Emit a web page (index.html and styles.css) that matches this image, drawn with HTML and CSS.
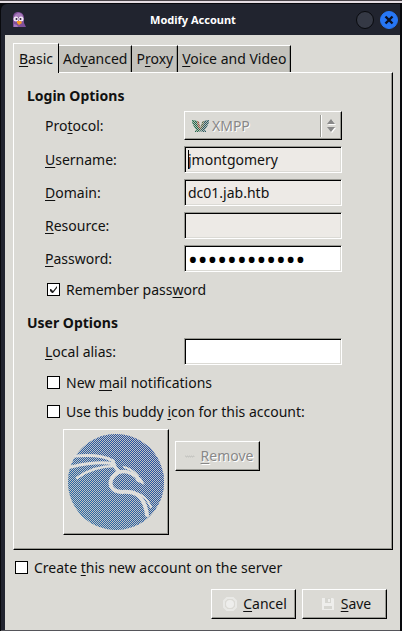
FILE: index.html
```
<!DOCTYPE html>
<html lang="en">
<head>
<meta charset="utf-8">
<title>Modify Account</title>
<link rel="stylesheet" href="styles.css">
</head>
<body>
<div class="window">
  <header class="titlebar">
    <svg class="app-icon" viewBox="0 0 14 16" aria-hidden="true">
      <path d="M1 15V6C1 2 3 0 6 0s6 2 6 6v5l2 4z" fill="#80509a"/>
      <path d="M2 5C3 2 5 1 7 1s4 2 4 4z" fill="#a77abb"/>
      <circle cx="4" cy="7" r="2.5" fill="#f2e9f5"/><circle cx="9" cy="7" r="2.5" fill="#f2e9f5"/>
      <circle cx="4.5" cy="7" r="1" fill="#33203f"/><circle cx="8.5" cy="7" r="1" fill="#33203f"/>
      <path d="M5 9h4l1 2-3 2-2-2z" fill="#f49a28"/>
      <path d="M2 12l3 1 1 2H2z" fill="#a77abb"/>
    </svg>
    <h1 class="title">Modify Account</h1>
    <div class="window-buttons">
      <button class="round" type="button" aria-label="Minimize"></button>
      <button class="round close" type="button" aria-label="Close"><svg viewBox="0 0 10 10" aria-hidden="true"><path d="M1.5 1.5l7 7M8.5 1.5l-7 7" stroke="#0b1020" stroke-width="2.4"/></svg></button>
    </div>
  </header>
  <form class="content">
    <nav class="tabs" role="tablist">
      <button class="tab active" type="button" role="tab" aria-selected="true"><u>B</u>asic</button>
      <button class="tab" type="button" role="tab">Ad<u>v</u>anced</button>
      <button class="tab" type="button" role="tab">P<u>r</u>oxy</button>
      <button class="tab" type="button" role="tab"><u>V</u>oice and Video</button>
    </nav>
    <section class="pane">
      <h2 class="heading">Login Options</h2>
      <div class="fields">
        <label for="protocol">Pro<u>t</u>ocol:</label>
        <div class="combo">
          <svg class="xmpp" viewBox="0 0 17 14" aria-hidden="true">
            <defs><pattern id="mesh" width="2" height="2" patternUnits="userSpaceOnUse"><path d="M0 0h1v1H0zM1 1h1v1H1z" fill="#b9bdb4"/></pattern></defs>
            <path d="M0 1l5 1c0 4 2 6 4 9l-2 2H3v-1l2-1C2 8 0 5 0 1z" fill="#1f6a4c"/>
            <path d="M5 2l2 1c0 2 1 4 2 6l-1 2C6 9 5 6 5 2z" fill="#a0503c"/>
            <path d="M17 1l-5 1c0 4-2 6-4 9l2 2h4v-1l-2-1c3-3 5-6 5-10z" fill="#2a5a66"/>
            <path d="M12 2l-2 1c0 2-1 4-2 6l1 2c2-2 3-5 3-9z" fill="#5c6a48"/>
            <path d="M0 0h17v14H0z" fill="url(#mesh)" shape-rendering="crispEdges" clip-path="url(#wings)"/>
            <clipPath id="wings"><path d="M0 1l7 2 2 5 1-5 7-2c0 4-2 7-5 10l2 1v1H3v-1l2-1C2 8 0 5 0 1z"/></clipPath>
          </svg>
          <select id="protocol" disabled><option>XMPP</option></select>
          <svg class="arrows" viewBox="0 0 8 13" aria-hidden="true"><path d="M1 6h8L5 1zM1 9h8l-4 5z" fill="#fff"/><path d="M0 5h8L4 0zM0 8h8l-4 5z" fill="#888"/></svg>
        </div>
        <label for="username"><u>U</u>sername:</label>
        <div class="entry"><input class="box readonly" id="username" type="text" value="jmontgomery" readonly><span class="caret"></span></div>
        <label for="domain"><u>D</u>omain:</label>
        <input class="box readonly" id="domain" type="text" value="dc01.jab.htb" readonly>
        <label for="resource"><u>R</u>esource:</label>
        <input class="box readonly" id="resource" type="text" readonly>
        <label for="password"><u>P</u>assword:</label>
        <input class="box secret" id="password" type="password" value="abcdefghijkl">
      </div>
      <label class="check"><input type="checkbox" checked><span>Remember pass<u>w</u>ord</span></label>
      <h2 class="heading second">User Options</h2>
      <div class="fields">
        <label for="alias"><u>L</u>ocal alias:</label>
        <input class="box" id="alias" type="text">
      </div>
      <label class="check"><input type="checkbox"><span>New <u>m</u>ail notifications</span></label>
      <label class="check"><input type="checkbox"><span>Use this buddy <u>i</u>con for this account:</span></label>
      <div class="buddy">
        <button class="button avatar" type="button" aria-label="Buddy icon">
          <svg viewBox="0 0 96 96" aria-hidden="true">
            <defs>
              <linearGradient id="blue" x1="1" y1="0" x2="0" y2="1"><stop stop-color="#2448a0"/><stop offset="1" stop-color="#2870a8"/></linearGradient>
              <pattern id="dots" width="2" height="2" patternUnits="userSpaceOnUse"><path d="M0 0h1v1H0zM1 1h1v1H1z" fill="#c4c4c2"/></pattern>
            </defs>
            <circle cx="48" cy="48" r="48" fill="url(#blue)"/>
            <circle cx="48" cy="48" r="48" fill="url(#dots)" shape-rendering="crispEdges"/>
            <g fill="none" stroke="#dededc" stroke-linecap="round">
              <path d="M7 22C20 21 36 21 45 27" stroke-width="3"/>
              <path d="M3 33C16 30 32 27 46 30" stroke-width="3"/>
              <path d="M9 44C20 36 32 32 47 32" stroke-width="2.5"/>
              <path d="M45 27C46 32 48 36 52 38C60 36 66 40 72 46" stroke-width="3.5"/>
              <path d="M56 33C62 35 66 37 70 42" stroke-width="2"/>
              <path d="M51 38C43 42 40 50 45 55C51 61 59 55 68 60C75 64 78 72 79 81" stroke-width="4"/>
              <path d="M68 59C76 61 80 66 83 73" stroke-width="2"/>
            </g>
            <path d="M67 42l6 2 4 7-9-4z" fill="#dededc"/>
          </svg>
        </button>
        <button class="button small" type="button" disabled><svg class="minus" viewBox="0 0 10 3" aria-hidden="true"><path d="M0 1h1v1h1V1h1v1h1V1h1v1h1V1h1v1h1V1h1v1" fill="none" stroke="#c4c4c0"/></svg><span><u>R</u>emove</span></button>
      </div>
    </section>
    <label class="check create"><input type="checkbox"><span>Create <u>t</u>his new account on the server</span></label>
    <footer class="actions">
      <button class="button small" type="button"><svg class="glyph" viewBox="0 0 14 14" aria-hidden="true"><path d="M4 1h6l3 3v6l-3 3H4l-3-3V4z" fill="none" stroke="#e9e9e6" stroke-width="2"/><circle cx="7" cy="7" r="4" fill="#eeeeec"/></svg><span><u>C</u>ancel</span></button>
      <button class="button small" type="button"><svg class="glyph" viewBox="0 0 14 14" aria-hidden="true"><path d="M1 1h11l1 1v11H1z" fill="#eeeeec"/><path d="M4 1h6v5H4zM3 9h8v3H3z" fill="#d6d6d1"/><path d="M7 2h2v3H7z" fill="#eeeeec"/></svg><span><u>S</u>ave</span></button>
    </footer>
  </form>
</div>
</body>
</html>
```
FILE: styles.css
```
* { box-sizing: border-box; }

body {
  margin: 0;
  padding-top: 4px;
  min-height: 100vh;
  display: flex;
  background: linear-gradient(#4b464b 1px, #e5dde3 1px, #e5dde3 3px, #08090d 3px);
  color: #111;
  font: 14px/20px "Noto Sans", sans-serif;
}

button, input, select { font: inherit; color: inherit; margin: 0; padding: 0; border: 0; border-radius: 0; }
u { text-decoration-thickness: 1px; text-underline-offset: 2px; }

.window {
  flex: 1;
  display: flex;
  flex-direction: column;
  margin: 0 2px 0 1px;
  padding-left: 4px;
  background: #21242f;
  border-bottom: 1px solid #55555a;
  border-radius: 6px 0 0 0;
}

.titlebar {
  display: grid;
  grid-template-columns: 48px 1fr 74px;
  align-items: center;
  height: 31px;
  padding-left: 7px;
}
.app-icon { width: 14px; height: 16px; }
.title { margin: 0; text-align: center; color: #fff; font: bold 11px/20px "Noto Sans", sans-serif; }
.window-buttons { display: flex; gap: 6px; justify-content: flex-end; padding-right: 2px; }
.round { display: grid; place-items: center; flex: none; width: 18px; height: 18px; border: 1px solid #090a0e; border-radius: 50%; background: #353945; }
.close { background: #2777f5; border-color: #2777f5; }
.close svg { width: 10px; height: 10px; }

.content { flex: 1; background: #dbdad5; padding: 8px 7px 10px 8px; }

.tabs { display: flex; align-items: flex-end; }
.tab {
  height: 27px;
  padding: 0 4px;
  background: #c3c2bc;
  border-top: 1px solid #fff;
  border-right: 1px solid #000;
  box-shadow: inset -1px 0 #999993;
}
.active { height: 30px; margin-bottom: -1px; padding: 0 5px; background: #dbdad5; border-left: 1px solid #fff; box-shadow: none; position: relative; }

.pane {
  padding: 13px 13px 14px;
  border: 1px solid;
  border-color: #fff #000 #000 #fff;
  box-shadow: inset -1px -1px #999993;
}
.heading { margin: 0 0 5px; font: bold 14px/20px "Noto Sans", sans-serif; }
.second { margin-top: 9px; }

.fields { display: grid; grid-template-columns: 139px 158px; row-gap: 6px; align-items: center; padding: 0 0 3px 18px; }

.box {
  width: 100%;
  height: 27px;
  padding: 0 3px;
  background: #fff;
  border: 1px solid;
  border-color: #999993 #fff #fff #999993;
  box-shadow: inset 1px 1px #000, inset -1px -1px #dbdad5;
  outline: 0;
}
.readonly { background: #edeae6; }
.secret { color: #000; font-size: 26px; }
.entry { position: relative; display: flex; }
.caret { position: absolute; left: 4px; top: 4px; width: 1px; height: 19px; background: #000; }

.combo, .button {
  border: 1px solid;
  border-color: #fff #000 #000 #fff;
  box-shadow: inset -1px -1px #999993;
  background: #dbdad5;
}
.combo { display: flex; align-items: center; height: 29px; padding: 0 6px 0 7px; }
.xmpp { flex: none; width: 17px; height: 14px; margin-right: 3px; }
.combo select { flex: 1; height: 22px; appearance: none; background: none; border-right: 1px solid #999993; box-shadow: 1px 0 #fff; opacity: 1; color: #888; text-shadow: 1px 1px #fff; }
.arrows { flex: none; width: 8px; height: 13px; margin-left: 6px; overflow: visible; }

.check { display: flex; align-items: center; gap: 6px; height: 29px; padding-left: 20px; }
.check input { appearance: none; width: 13px; height: 13px; background: #fff; border: 1px solid #000; }
.check input:checked::before {
  content: "";
  display: block;
  width: 11px;
  height: 11px;
  background: #222;
  clip-path: polygon(2px 5px, 3px 5px, 5px 7px, 9px 2px, 9px 4px, 5px 9px, 4px 9px, 2px 7px);
}

.buddy { display: flex; align-items: flex-start; gap: 6px; padding: 3px 0 0 36px; }
.avatar { width: 106px; height: 106px; padding: 4px; }
.avatar svg { display: block; width: 96px; height: 96px; }
.small { display: flex; align-items: center; justify-content: center; gap: 6px; width: 85px; height: 30px; padding-left: 3px; }
.buddy .small { margin-top: 12px; color: #888; text-shadow: 1px 1px #fff; }
.minus { width: 10px; height: 3px; }
.glyph { width: 14px; height: 14px; }

.create { height: 35px; padding-left: 2px; }
.actions { display: flex; justify-content: flex-end; gap: 6px; padding: 4px 6px 0 0; }
```
